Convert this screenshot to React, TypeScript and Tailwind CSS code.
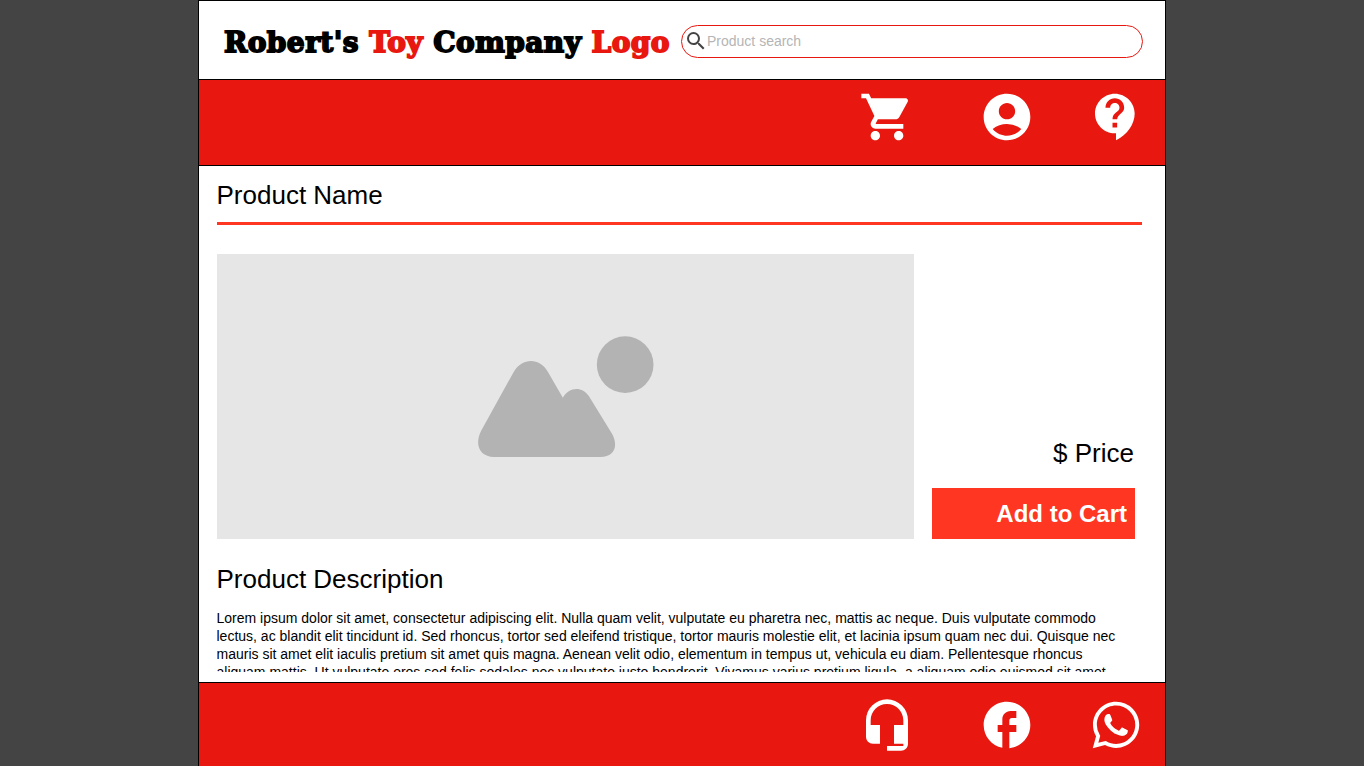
import { MdShoppingCart, MdAccountCircle, MdContactSupport, MdHeadsetMic, MdFacebook, MdWhatsapp, MdSearch } from 'react-icons/md';

const sans = "font-['Liberation_Sans',Arial,sans-serif]";

export default function App() {
  return (
    <div className={`h-screen overflow-hidden bg-[#444444] flex justify-center ${sans}`}>
      <div className="w-[968px] h-full flex flex-col bg-white border-x border-black border-t">
        {/* header */}
        <div className="h-[78px] shrink-0 flex items-center pl-[25px]">
          <div className="w-[457px] mt-[5px] shrink-0 whitespace-nowrap font-['DejaVu_Serif',serif] font-bold text-[28px] tracking-[0.45px] [-webkit-text-stroke:1.8px_currentColor] text-black">
            Robert's <span className="text-[#e81810]">Toy</span> Company <span className="text-[#e81810]">Logo</span>
          </div>
          <div className="w-[462px] h-[33px] mt-[2px] flex items-center rounded-[17px] border border-[#e81810] pl-[2px]">
            <MdSearch className="text-[#444444] shrink-0" size={24} />
            <span className="text-sm text-[#b5b5b5] -ml-[1px]">Product search</span>
          </div>
        </div>

        {/* nav */}
        <div className="h-[87px] shrink-0 flex items-center justify-end bg-[#e81810] border-y border-black text-white pr-[21px] pb-3">
          <MdShoppingCart size={56} className="mr-[64px]" />
          <MdAccountCircle size={56} className="mr-[53px]" />
          <MdContactSupport size={56} />
        </div>

        {/* product */}
        <div className="flex-1 min-h-0 overflow-hidden pl-[17.5px] pr-[18px]">
          <h1 className="pt-[13px] pb-[11px] text-[26px] leading-[32px] text-black border-b-[3px] border-[#ff3621] mr-[5px]">Product Name</h1>
          <div className="flex mt-[29px]">
            <div className="w-[697px] h-[285px] bg-[#e6e6e6] flex items-center justify-center">
              <svg width="210" height="150" viewBox="0 0 630 450" className="translate-x-[0.5px] translate-y-[-2px]" fill="#b3b3b3">
                <circle cx="494" cy="134" r="85" />
                <path d="M100 411C60 411 40 377 62 332L160 155C185 112 238 112 262 155L307 233C325 200 365 198 385 228L455 342C475 380 460 411 420 411Z" />
              </svg>
            </div>
            <div className="w-[203px] ml-[18.5px] flex flex-col justify-end">
              <div className="text-[26px] leading-[30px] text-right mb-[20px] pr-[1px]">$ Price</div>
              <button className="h-[51px] w-full bg-[#ff3621] text-white font-bold text-[24px] text-right pr-[8px]">Add to Cart</button>
            </div>
          </div>
          <h2 className="mt-[24px] text-[26px] leading-[32px] text-black">Product Description</h2>
          <p className="mt-[14px] h-[63px] overflow-hidden text-sm leading-[18px] text-black w-[905px]">
            Lorem ipsum dolor sit amet, consectetur adipiscing elit. Nulla quam velit, vulputate eu pharetra nec, mattis ac neque. Duis vulputate commodo lectus, ac blandit elit tincidunt id. Sed rhoncus, tortor sed eleifend tristique, tortor mauris molestie elit, et lacinia ipsum quam nec dui. Quisque nec mauris sit amet elit iaculis pretium sit amet quis magna. Aenean velit odio, elementum in tempus ut, vehicula eu diam. Pellentesque rhoncus aliquam mattis. Ut vulputate eros sed felis sodales nec vulputate justo hendrerit. Vivamus varius pretium ligula, a aliquam odio euismod sit amet.
          </p>
        </div>

        {/* footer */}
        <div className="h-[84px] shrink-0 flex items-center justify-end bg-[#e81810] border-t border-black text-white pr-[21px]">
          <MdHeadsetMic size={56} className="mr-[64px]" />
          <MdFacebook size={56} className="mr-[53px]" />
          <MdWhatsapp size={56} />
        </div>
      </div>
    </div>
  );
}
